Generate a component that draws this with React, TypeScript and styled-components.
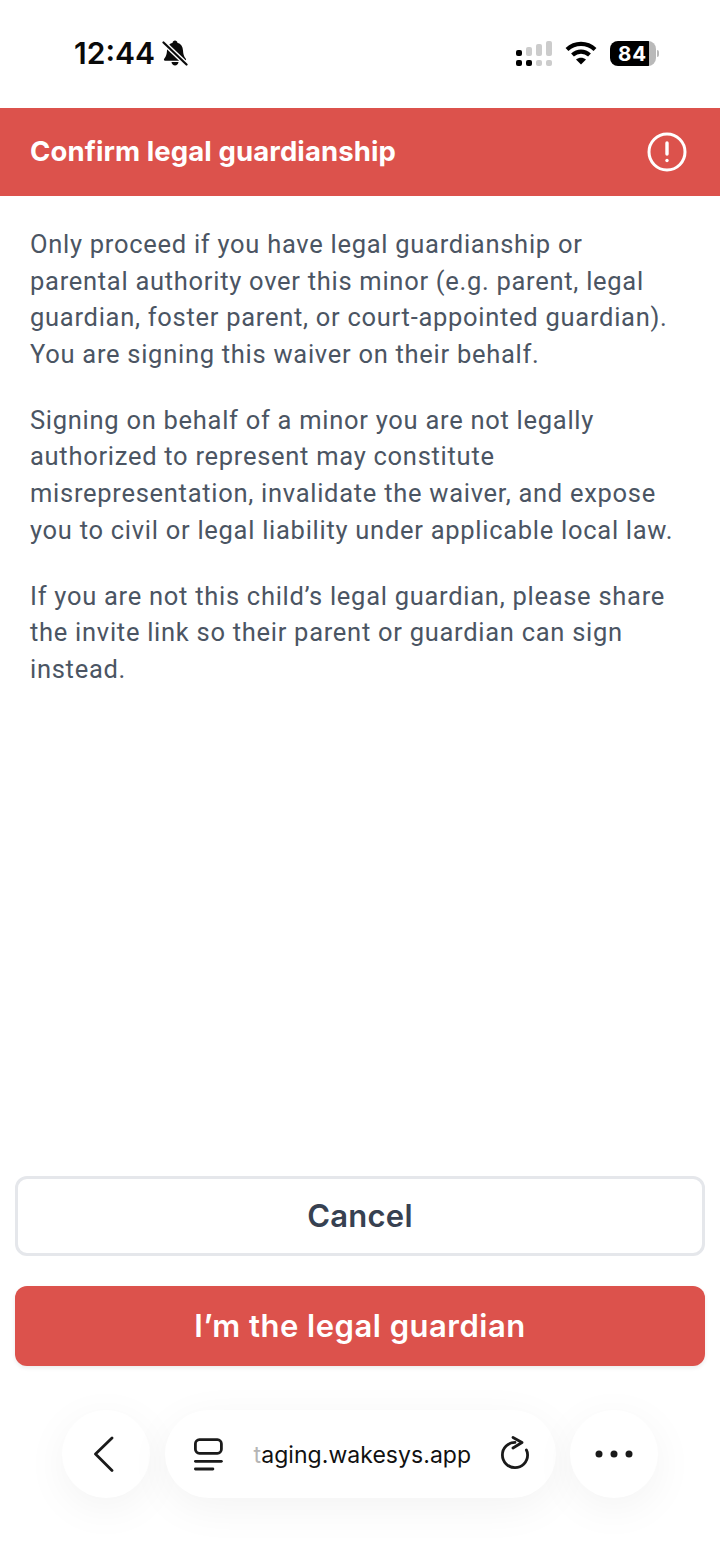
import React from "react";
import styled, { createGlobalStyle } from "styled-components";

const Global = createGlobalStyle`
  html, body { margin: 0; padding: 0; background: #fff; }
  * { box-sizing: border-box; }
  body { font-family: Inter, "Liberation Sans", sans-serif; }
`;

const Page = styled.div`
  width: 720px;
  height: 1561px;
  display: flex;
  flex-direction: column;
  background: #fff;
  overflow: hidden;
`;

const StatusBar = styled.div`
  height: 108px;
  flex: none;
  display: flex;
  align-items: flex-start;
  justify-content: space-between;
  padding: 35px 64px 0 74px;
`;

const StatusGroup = styled.div<{ $gap: number }>`
  display: flex;
  align-items: center;
  gap: ${(p) => p.$gap}px;
  height: 36px;
`;

const Clock = styled.span`
  font-size: 30px;
  font-weight: 600;
  color: #0a0a0a;
  line-height: 36px;
`;

const Battery = styled.div`
  position: relative;
  width: 46px;
  height: 25px;
  border-radius: 8px;
  background: linear-gradient(90deg, #000 0 85%, #b9b9b9 85% 100%);
  color: #fff;
  font-size: 20.5px;
  font-weight: 700;
  line-height: 25px;
  padding-left: 8px;
  letter-spacing: 0.8px;
  &::after {
    content: "";
    position: absolute;
    right: -3px;
    top: 9px;
    width: 2px;
    height: 7px;
    border-radius: 0 2px 2px 0;
    background: #b9b9b9;
  }
`;

const Banner = styled.header`
  height: 88px;
  flex: none;
  background: #dc524c;
  display: flex;
  align-items: center;
  justify-content: space-between;
  padding: 0 33px 0 30px;
`;

const BannerTitle = styled.h1`
  margin: 0 0 2px;
  font-size: 27.5px;
  font-weight: 700;
  letter-spacing: 0.1px;
  color: #fff;
`;

const Body = styled.main`
  flex: 1;
  padding: 30px 30px 0;
  display: flex;
  flex-direction: column;
  gap: 29.5px;
`;

const Paragraph = styled.p`
  margin: 0;
  font-family: Roboto, Inter, sans-serif;
  font-size: 25.5px;
  line-height: 36.6px;
  font-weight: 400;
  letter-spacing: 0.72px;
  color: #4b5563;
  white-space: pre-line;
`;

const Actions = styled.div`
  flex: none;
  padding: 0 15px;
  display: flex;
  flex-direction: column;
  gap: 30px;
`;

const ActionButton = styled.button<{ $primary?: boolean }>`
  height: 80px;
  width: 100%;
  border-radius: 12px;
  padding: 0 0 2px;
  font-family: inherit;
  font-size: 31px;
  font-weight: 600;
  letter-spacing: ${(p) => (p.$primary ? "0.5px" : "0.25px")};
  border: ${(p) => (p.$primary ? "none" : "3px solid #e5e7eb")};
  background: ${(p) => (p.$primary ? "#dc524c" : "#fff")};
  color: ${(p) => (p.$primary ? "#fff" : "#374151")};
  box-shadow: ${(p) => (p.$primary ? "0 2px 4px rgba(0,0,0,0.08)" : "none")};
`;

const BrowserBar = styled.nav`
  flex: none;
  height: 195px;
  padding: 44px 62px 0;
  display: flex;
  align-items: flex-start;
  justify-content: space-between;
`;

const RoundControl = styled.div`
  width: 88px;
  height: 88px;
  border-radius: 50%;
  background: #fff;
  display: flex;
  align-items: center;
  justify-content: center;
  box-shadow: 0 10px 44px rgba(0, 0, 0, 0.05);
`;

const AddressPill = styled.div`
  width: 391px;
  height: 88px;
  border-radius: 44px;
  background: #fff;
  display: flex;
  align-items: center;
  padding: 0 27px 0 28px;
  box-shadow: 0 10px 44px rgba(0, 0, 0, 0.05);
`;

const Url = styled.span`
  flex: 1;
  margin-left: 31px;
  padding-top: 2px;
  font-size: 23px;
  font-weight: 400;
  color: #111;
  white-space: nowrap;
  letter-spacing: 0.05px;
`;

const FadedLetter = styled.span`
  color: #b5b5b5;
`;

const MutedBell = () => (
  <svg width="26" height="28" viewBox="0 0 26 28">
    <path fill="#0a0a0a" d="M13 1.500c1.400 0 2.300 1 2.400 2.200 3.600 1 5.400 4 5.600 7.800.2 3.600.8 6 2.800 8.200.7.8.2 2-.9 2H3.100c-1.100 0-1.600-1.200-.9-2 2-2.200 2.600-4.600 2.800-8.200.2-3.800 2-6.800 5.600-7.800C10.700 2.500 11.600 1.500 13 1.500z" />
    <path fill="#0a0a0a" d="M9.500 23h7c-.3 2-1.700 3.500-3.500 3.500S9.800 25 9.500 23z" />
    <path stroke="#fff" strokeWidth="5" d="M1.500 3.500l23 22" />
    <path stroke="#0a0a0a" strokeWidth="2.200" strokeLinecap="round" d="M1.500 3.500l23 22" />
  </svg>
);

const SignalDots = () => (
  <svg width="36" height="28" viewBox="0 0 36 28">
    <rect x="0" y="21" width="6" height="6" rx="2" fill="#000" />
    <rect x="0" y="11" width="6" height="6" rx="2" fill="#000" />
    <rect x="10" y="21" width="6" height="6" rx="2" fill="#000" />
    <rect x="10" y="8" width="6" height="9" rx="2" fill="#ccc" />
    <rect x="20" y="21" width="6" height="6" rx="2" fill="#ccc" />
    <rect x="20" y="5" width="6" height="12" rx="2" fill="#ccc" />
    <rect x="30" y="21" width="6" height="6" rx="2" fill="#ccc" />
    <rect x="30" y="2" width="6" height="15" rx="2" fill="#ccc" />
  </svg>
);

const Wifi = () => (
  <svg width="32" height="24" viewBox="0 0 32 24">
    <path fill="none" stroke="#000" strokeWidth="4.200" d="M2 8.500C10 1 22 1 30 8.500" />
    <path fill="none" stroke="#000" strokeWidth="4.200" d="M7.500 14c5-4.500 12-4.500 17 0" />
    <path fill="#000" d="M11 18.500c3-2.500 7-2.500 10 0L16 23.500z" />
  </svg>
);

const AlertCircle = () => (
  <svg width="40" height="40" viewBox="0 0 40 40" fill="none" stroke="#fff">
    <circle cx="20" cy="20" r="18" strokeWidth="3" />
    <path d="M20 11v11" strokeWidth="3.400" strokeLinecap="round" />
    <circle cx="20" cy="28.500" r="1.700" fill="#fff" stroke="none" />
  </svg>
);

const BackChevron = () => (
  <svg width="24" height="36" viewBox="0 0 24 36" fill="none" stroke="#1a1a1a" strokeWidth="2.800" strokeLinecap="round" strokeLinejoin="round">
    <path d="M18 2L1.500 18 18 34.500" />
  </svg>
);

const TabsGlyph = () => (
  <svg width="30" height="36" viewBox="0 0 30 36" fill="none" stroke="#1a1a1a" strokeWidth="2.800" strokeLinecap="round">
    <rect x="2.400" y="3.700" width="26" height="13.600" rx="4" />
    <path d="M2.400 25.300h26" />
    <path d="M2.400 33h17.500" />
  </svg>
);

const Reload = () => (
  <svg width="30" height="36" viewBox="0 0 30 36" fill="none" stroke="#1a1a1a" strokeWidth="2.800" strokeLinecap="round" strokeLinejoin="round">
    <path d="M16 6.400A12.600 12.600 0 1 0 28.600 19c0-2-.4-3.600-1.200-5" />
    <path d="M14 1.500L23 6.500 14 12" />
  </svg>
);

const MoreDots = () => (
  <svg width="38" height="10" viewBox="0 0 38 10" fill="#1a1a1a">
    <circle cx="4" cy="5" r="3.500" />
    <circle cx="19" cy="5" r="3.500" />
    <circle cx="34" cy="5" r="3.500" />
  </svg>
);

export default function App() {
  return (
    <Page>
      <Global />
      <StatusBar>
        <StatusGroup $gap={7}>
          <Clock>12:44</Clock>
          <MutedBell />
        </StatusGroup>
        <StatusGroup $gap={13}>
          <SignalDots />
          <Wifi />
          <Battery>84</Battery>
        </StatusGroup>
      </StatusBar>
      <Banner>
        <BannerTitle>Confirm legal guardianship</BannerTitle>
        <AlertCircle />
      </Banner>
      <Body>
        <Paragraph>
          {"Only proceed if you have legal guardianship or\nparental authority over this minor (e.g. parent, legal\nguardian, foster parent, or court-appointed guardian).\nYou are signing this waiver on their behalf."}
        </Paragraph>
        <Paragraph>
          {"Signing on behalf of a minor you are not legally\nauthorized to represent may constitute\nmisrepresentation, invalidate the waiver, and expose\nyou to civil or legal liability under applicable local law."}
        </Paragraph>
        <Paragraph>
          {"If you are not this child’s legal guardian, please share\nthe invite link so their parent or guardian can sign\ninstead."}
        </Paragraph>
      </Body>
      <Actions>
        <ActionButton>Cancel</ActionButton>
        <ActionButton $primary>I’m the legal guardian</ActionButton>
      </Actions>
      <BrowserBar>
        <RoundControl>
          <BackChevron />
        </RoundControl>
        <AddressPill>
          <TabsGlyph />
          <Url>
            <FadedLetter>t</FadedLetter>aging.wakesys.app
          </Url>
          <Reload />
        </AddressPill>
        <RoundControl>
          <MoreDots />
        </RoundControl>
      </BrowserBar>
    </Page>
  );
}
